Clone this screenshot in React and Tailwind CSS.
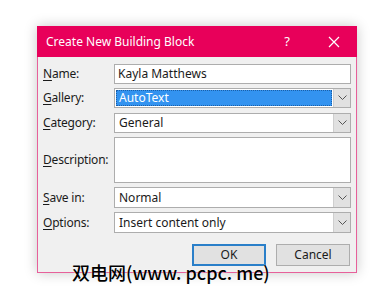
import React from 'react';

function Label({ k, rest }) {
  return (
    <div className="w-[71px] shrink-0 text-[12px] tracking-[-0.2px] text-[#1a1a1a]">
      <span className="underline underline-offset-2">{k}</span>
      {rest}
    </div>
  );
}

function Chevron() {
  return (
    <div className="w-[17px] h-full bg-[#e1e1e1] border-l border-[#cfcfcf] flex items-center justify-center shrink-0">
      <svg width="9" height="6" viewBox="0 0 9 6">
        <polyline points="0.5,0.5 4.5,4.5 8.5,0.5" fill="none" stroke="#555" strokeWidth="1" />
      </svg>
    </div>
  );
}

function Select({ value, selected, h = 'h-[21px]' }) {
  return (
    <div className={`flex-1 ${h} border border-[#adadad] bg-white flex items-stretch`}>
      <div className="flex-1 flex items-center p-[1px]">
        {selected ? (
          <div className="w-full h-full bg-[#3393f0] border border-dotted border-[#1a5fa8] flex items-center px-[2px] text-white text-[12px]">
            {value}
          </div>
        ) : (
          <span className="px-[3px] text-[12px] text-[#1a1a1a]">{value}</span>
        )}
      </div>
      <Chevron />
    </div>
  );
}

export default function App() {
  return (
    <div className="relative w-[389px] h-[296px] bg-white overflow-hidden" style={{ fontFamily: '"Noto Sans", "Open Sans", sans-serif' }}>
      <div className="ml-[37px] mt-[26px] w-[320px] h-[247px] flex flex-col bg-[#f0f0f0] border border-[#e7609a] shadow-[0_0_12px_rgba(0,0,0,0.22)]">
        {/* Title bar */}
        <div className="h-[31px] -mx-px -mt-px bg-[#e8005a] flex items-center text-white shrink-0">
          <span className="ml-[9px] text-[12px]">Create New Building Block</span>
          <span className="ml-auto text-[13px] mr-[38px]">?</span>
          <svg width="12" height="12" viewBox="0 0 12 12" className="mr-[17px]">
            <path d="M1 1 L11 11 M11 1 L1 11" stroke="#fff" strokeWidth="1.2" />
          </svg>
        </div>

        {/* Body */}
        <div className="flex flex-col pl-[5px] pr-[5px] pt-[7px]">
          <div className="flex items-center">
            <Label k="N" rest="ame:" />
            <div className="flex-1 h-[20px] border border-[#adadad] bg-white flex items-center px-[3px] text-[12px] text-[#1a1a1a]">
              Kayla Matthews
            </div>
          </div>
          <div className="flex items-center mt-[4px]">
            <Label k="G" rest="allery:" />
            <Select value="AutoText" selected h="h-[20px]" />
          </div>
          <div className="flex items-center mt-[5px]">
            <Label k="C" rest="ategory:" />
            <Select value="General" h="h-[20px]" />
          </div>
          <div className="flex items-center mt-[4px]">
            <Label k="D" rest="escription:" />
            <div className="flex-1 h-[46px] border border-[#adadad] bg-white" />
          </div>
          <div className="flex items-center mt-[4px]">
            <Label k="S" rest="ave in:" />
            <Select value="Normal" />
          </div>
          <div className="flex items-center mt-[4px]">
            <Label k="O" rest="ptions:" />
            <Select value="Insert content only" />
          </div>

          <div className="flex justify-end gap-[10px] mt-[11px] pr-[1px]">
            <button className="w-[74px] h-[22px] bg-[#e1e1e1] border-2 border-[#2a7fc9] text-[12px] text-[#1a1a1a] flex items-center justify-center">
              OK
            </button>
            <button className="w-[74px] h-[22px] bg-[#e1e1e1] border border-[#adadad] text-[12px] text-[#1a1a1a] flex items-center justify-center">
              Cancel
            </button>
          </div>
        </div>
      </div>

      {/* Watermark */}
      <div
        className="absolute left-[72px] top-[263px] text-[18px] font-medium text-black leading-none whitespace-nowrap"
        style={{ fontFamily: '"Noto Sans CJK SC", sans-serif', textShadow: '0 0 2px #fff' }}
      >
        双电网(www. pcpc. me)
      </div>
    </div>
  );
}
